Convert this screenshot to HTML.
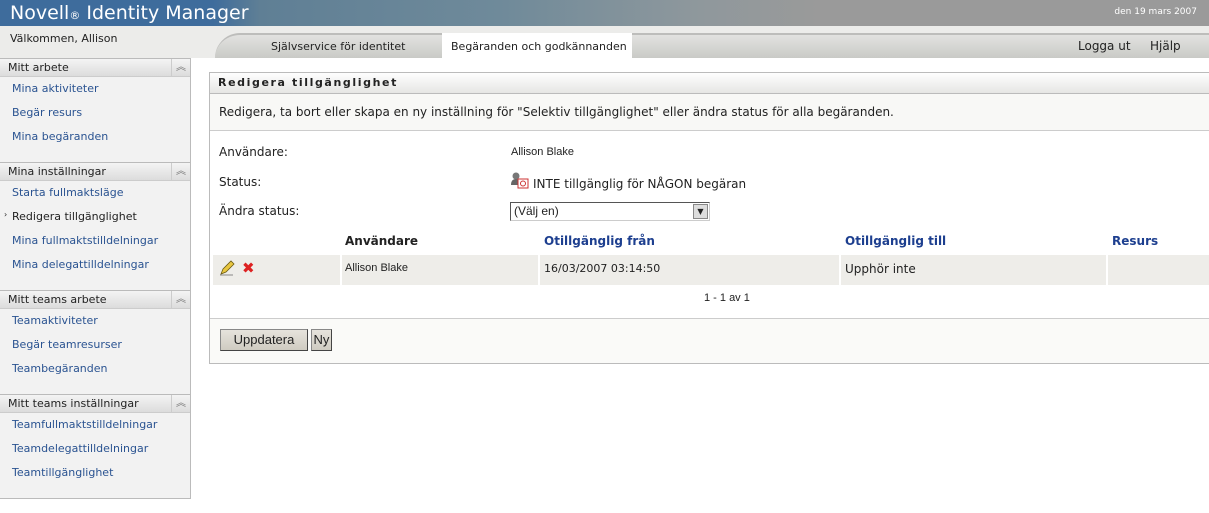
<!DOCTYPE html>
<html><head><meta charset="utf-8"><style>
*{margin:0;padding:0;box-sizing:border-box}
body{width:1209px;height:513px;overflow:hidden;background:#fff;font-family:"DejaVu Sans","Liberation Sans",sans-serif;font-size:11px;color:#222;position:relative}
.a{position:absolute;white-space:nowrap}
.hdr{left:0;top:0;width:1209px;height:26px;background:linear-gradient(90deg,#3e6c9c 0,#3e6c9c 213px,#5f7f95 260px,#6f8a9a 500px,#8f989c 700px,#9a9a9a 820px,#9a9a9a 100%)}
.logo{left:10px;top:2px;color:#fff;font-size:19px;font-family:"DejaVu Sans",sans-serif}
.bar{left:0;top:26px;width:1209px;height:32px;background:#ececea}
.tabs{left:215px;top:33px;width:994px;height:25px;background:linear-gradient(#e2e2e0,#c9cac6);border-top:2px solid #bdbdbb;border-radius:40px 0 0 0}
.side{left:0;top:58px;width:191px;height:441px;background:#f2f2f2;border-right:1px solid #bbb;border-bottom:1px solid #bbb}
.sh{left:0;width:190px;height:19px;background:linear-gradient(#f4f4f4,#dcdcdc);border-top:1px solid #bbb;border-bottom:1px solid #ccc;font-size:11px;color:#222;padding:2px 8px}
.sh i{position:absolute;right:0;top:0;width:19px;height:17px;border-left:1px solid #ccc;font-style:normal;font-size:10px;color:#777;text-align:center;line-height:17px}
.lk{left:12px;color:#2a5391;font-size:11px}
.panel{left:209px;top:72px;width:1010px;height:292px;border:1px solid #bbb;background:#fff}
.pt{left:209px;top:72px;width:1000px;height:22px;background:linear-gradient(#fefefe,#e6e6e4);border:1px solid #bbb;border-right:none;font-weight:bold;letter-spacing:1.6px;padding:3px 8px;font-size:11px}
.lbl{font-size:12px;color:#222}
.th{font-weight:bold;color:#1d3f8f;font-size:12px}
.btn{background:linear-gradient(#e6e3dc,#cfcbc1);border:1px solid #888;border-right-color:#444;border-bottom-color:#444;font-family:"Liberation Sans",sans-serif;font-size:13px;text-align:center;line-height:19px}
</style></head><body>
<div class="a hdr"></div>
<div class="a logo">Novell<span style="font-size:11px">®</span> Identity Manager</div>
<div class="a" style="right:12px;top:7px;color:#fff;font-size:9px">den 19 mars 2007</div>
<div class="a bar"></div>
<div class="a" style="left:10px;top:32px;font-size:11px">Välkommen, Allison</div>
<div class="a tabs"></div>
<div class="a" style="left:271px;top:40px">Självservice för identitet</div>
<div class="a" style="left:442px;top:33px;width:190px;height:25px;background:#fff"></div>
<div class="a" style="left:451px;top:40px">Begäranden och godkännanden</div>
<div class="a" style="left:1078px;top:39px;font-size:12px">Logga ut</div>
<div class="a" style="left:1150px;top:39px;font-size:12px">Hjälp</div>

<div class="a side"></div>
<div class="a sh" style="top:58px">Mitt arbete<i>︽</i></div>
<div class="a lk" style="top:82px">Mina aktiviteter</div>
<div class="a lk" style="top:106px">Begär resurs</div>
<div class="a lk" style="top:130px">Mina begäranden</div>
<div class="a sh" style="top:162px">Mina inställningar<i>︽</i></div>
<div class="a lk" style="top:186px">Starta fullmaktsläge</div>
<div class="a" style="left:4px;top:210px;font-size:8px">›</div>
<div class="a lk" style="top:210px;color:#222">Redigera tillgänglighet</div>
<div class="a lk" style="top:234px">Mina fullmaktstilldelningar</div>
<div class="a lk" style="top:258px">Mina delegattilldelningar</div>
<div class="a sh" style="top:290px">Mitt teams arbete<i>︽</i></div>
<div class="a lk" style="top:314px">Teamaktiviteter</div>
<div class="a lk" style="top:338px">Begär teamresurser</div>
<div class="a lk" style="top:362px">Teambegäranden</div>
<div class="a sh" style="top:394px">Mitt teams inställningar<i>︽</i></div>
<div class="a lk" style="top:418px">Teamfullmaktstilldelningar</div>
<div class="a lk" style="top:442px">Teamdelegattilldelningar</div>
<div class="a lk" style="top:466px">Teamtillgänglighet</div>

<div class="a panel"></div>
<div class="a" style="left:210px;top:93px;width:999px;height:38px;background:#f8f8f6;border-bottom:1px solid #ccc"></div>
<div class="a pt">Redigera tillgänglighet</div>
<div class="a lbl" style="left:219px;top:105px">Redigera, ta bort eller skapa en ny inställning för "Selektiv tillgänglighet" eller ändra status för alla begäranden.</div>
<div class="a lbl" style="left:219px;top:145px">Användare:</div>
<div class="a" style="left:511px;top:146px;font-family:'Liberation Sans',sans-serif;font-size:11px">Allison Blake</div>
<div class="a lbl" style="left:219px;top:175px">Status:</div>
<svg class="a" style="left:510px;top:171px" width="20" height="18" viewBox="0 0 20 18"><circle cx="6" cy="5" r="3.5" fill="#777"/><path d="M1 14q0-6 5-6t5 6z" fill="#666"/><rect x="8" y="8" width="10" height="9" fill="#fff" stroke="#c33"/><circle cx="13" cy="12.5" r="2.5" fill="none" stroke="#c33"/></svg>
<div class="a lbl" style="left:533px;top:177px">INTE tillgänglig för NÅGON begäran</div>
<div class="a lbl" style="left:219px;top:204px">Ändra status:</div>
<div class="a" style="left:510px;top:202px;width:200px;height:19px;border:1px solid #555;border-right-color:#ccc;border-bottom-color:#ccc;background:#fff;font-family:'Liberation Sans',sans-serif;font-size:12px;padding:1px 3px">(Välj en)</div>
<div class="a" style="left:693px;top:204px;width:15px;height:15px;background:#ddd;border:1px solid #888;font-size:8px;text-align:center;line-height:14px">▼</div>

<div class="a th" style="left:345px;top:234px;color:#222">Användare</div>
<div class="a th" style="left:544px;top:234px">Otillgänglig från</div>
<div class="a th" style="left:845px;top:234px">Otillgänglig till</div>
<div class="a th" style="left:1112px;top:234px">Resurs</div>
<div class="a" style="left:213px;top:255px;width:996px;height:30px;background:#eeede9"></div>
<div class="a" style="left:340px;top:255px;width:2px;height:30px;background:#fff"></div>
<div class="a" style="left:538px;top:255px;width:2px;height:30px;background:#fff"></div>
<div class="a" style="left:839px;top:255px;width:2px;height:30px;background:#fff"></div>
<div class="a" style="left:1106px;top:255px;width:2px;height:30px;background:#fff"></div>
<svg class="a" style="left:219px;top:260px" width="16" height="16" viewBox="0 0 16 16"><path d="M2 14l2-5 8-8 3 3-8 8z" fill="#e8c640" stroke="#6a5a10" stroke-width="0.8"/><path d="M1 15h13" stroke="#888"/></svg>
<div class="a" style="left:242px;top:259px;color:#d22;font-size:15px;font-weight:bold">✖</div>
<div class="a" style="left:345px;top:262px;font-family:'Liberation Sans',sans-serif;font-size:11px">Allison Blake</div>
<div class="a" style="left:544px;top:262px;font-size:11px">16/03/2007 03:14:50</div>
<div class="a lbl" style="left:845px;top:262px">Upphör inte</div>
<div class="a" style="left:704px;top:292px;font-family:'Liberation Sans',sans-serif;font-size:11px">1 - 1 av 1</div>
<div class="a" style="left:210px;top:318px;width:999px;height:45px;background:#fafaf8;border-top:1px solid #ccc"></div>
<div class="a btn" style="left:220px;top:329px;width:88px;height:22px">Uppdatera</div>
<div class="a btn" style="left:311px;top:329px;width:21px;height:22px">Ny</div>
</body></html>
